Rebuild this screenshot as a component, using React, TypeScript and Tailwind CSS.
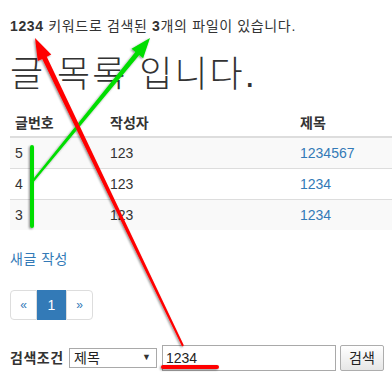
const rows = [
  { id: 5, writer: "123", title: "1234567" },
  { id: 4, writer: "123", title: "1234" },
  { id: 3, writer: "123", title: "1234" },
]

type Pt = [number, number]

// tapered arrow: thin at the tail, wide at the head
const arrowPoints = (tail: Pt, tip: Pt, tailW: number, shaftW: number, headL: number, headW: number) => {
  const dx = tip[0] - tail[0]
  const dy = tip[1] - tail[1]
  const len = Math.hypot(dx, dy)
  const ux = dx / len
  const uy = dy / len
  const nx = -uy
  const ny = ux
  const bx = tip[0] - headL * ux
  const by = tip[1] - headL * uy
  const pts: Pt[] = [
    [tail[0] + nx * tailW / 2, tail[1] + ny * tailW / 2],
    [bx + nx * shaftW / 2, by + ny * shaftW / 2],
    [bx + nx * headW / 2, by + ny * headW / 2],
    tip,
    [bx - nx * headW / 2, by - ny * headW / 2],
    [bx - nx * shaftW / 2, by - ny * shaftW / 2],
    [tail[0] - nx * tailW / 2, tail[1] - ny * tailW / 2],
  ]
  return pts.map(p => p.join(",")).join(" ")
}

const Annotations = () => {
  return (
    <svg className="absolute left-0 top-0 pointer-events-none" width={392} height={386}>
      <defs>
        <filter id="sh" x="-10%" y="-10%" width="120%" height="120%">
          <feDropShadow dx="-1" dy="1" stdDeviation="0.8" floodColor="#000" floodOpacity="0.45" />
        </filter>
      </defs>
      <g filter="url(#sh)">
        <line x1={32} y1={147} x2={32} y2={226} stroke="#00dd00" strokeWidth={4} strokeLinecap="round" />
        <polygon points={arrowPoints([33, 181], [150, 38], 2, 5, 20, 15)} fill="#00dd00" />
        <polygon points={arrowPoints([183, 346], [35, 38], 2, 5, 22, 15)} fill="#ff0000" />
        <line x1={163} y1={367} x2={217} y2={367} stroke="#ff0000" strokeWidth={4} strokeLinecap="round" />
      </g>
    </svg>
  )
}

export default function App() {
  return (
    <div className="relative w-[392px] h-[386px] overflow-hidden bg-white text-[#333] font-['Liberation_Sans','Noto_Sans_CJK_KR',sans-serif]">
      <div className="flex flex-col pl-[10px] pt-[16px]">
        <p className="text-[14px] leading-[20px] tracking-[0.65px]">
          <b>1234</b> 키워드로 검색된 <b>3</b>개의 파일이 있습니다.
        </p>

        <h1 className="mt-[19px] text-[36px] leading-[40px] font-light tracking-[2px]">글 목록 입니다.</h1>

        <table className="mt-[9px] w-[382px] table-fixed text-[14px] leading-[20px] border-collapse">
          <thead>
            <tr>
              <th className="w-[95px] text-left font-bold pt-[9px] pb-[3px] px-[5px] border-b-2 border-[#ddd]">글번호</th>
              <th className="w-[190px] text-left font-bold pt-[9px] pb-[3px] px-[5px] border-b-2 border-[#ddd]">작성자</th>
              <th className="text-left font-bold pt-[9px] pb-[3px] px-[5px] border-b-2 border-[#ddd]">제목</th>
            </tr>
          </thead>
          <tbody>
            {rows.map((r, i) => (
              <tr key={r.id} className={i % 2 === 0 ? "bg-[#f9f9f9]" : "bg-white"}>
                <td className="py-[5px] px-[5px] border-t border-[#ddd]">{r.id}</td>
                <td className="py-[5px] px-[5px] border-t border-[#ddd]">{r.writer}</td>
                <td className="py-[5px] px-[5px] border-t border-[#ddd]">
                  <a className="text-[#337ab7]">{r.title}</a>
                </td>
              </tr>
            ))}
          </tbody>
        </table>

        <a className="mt-[19px] text-[14px] leading-[20px] tracking-[0.5px] text-[#337ab7]">새글 작성</a>

        <div className="mt-[21px] flex w-fit text-[12px] text-[#337ab7]">
          <span className="w-[27px] h-[30px] flex items-center justify-center border border-[#ddd] rounded-l-[4px]">«</span>
          <span className="w-[29px] h-[30px] flex items-center justify-center bg-[#337ab7] border border-[#337ab7] text-white text-[14px]">1</span>
          <span className="w-[27px] h-[30px] flex items-center justify-center border border-[#ddd] rounded-r-[4px]">»</span>
        </div>

        <div className="mt-[25px] flex items-center h-[26px]">
          <span className="w-[59px] text-[14px] font-bold tracking-[0.5px]">검색조건</span>
          <div className="w-[88px] h-[20px] border border-[#a9a9a9] flex items-center justify-between pl-[4px] pr-[5px] text-[14px] text-[#222]">
            <span>제목</span>
            <span className="text-[9px] text-[#333]">▼</span>
          </div>
          <input
            readOnly
            value="1234"
            className="ml-[5px] w-[174px] h-[26px] border border-[#a9a9a9] px-[3px] text-[14px] text-[#222] outline-none"
          />
          <button className="ml-[4px] w-[44px] h-[26px] border border-[#adadad] rounded-[2px] bg-gradient-to-b from-white to-[#e6e6e6] text-[14px] text-[#222]">
            검색
          </button>
        </div>
      </div>
      <Annotations />
    </div>
  )
}
